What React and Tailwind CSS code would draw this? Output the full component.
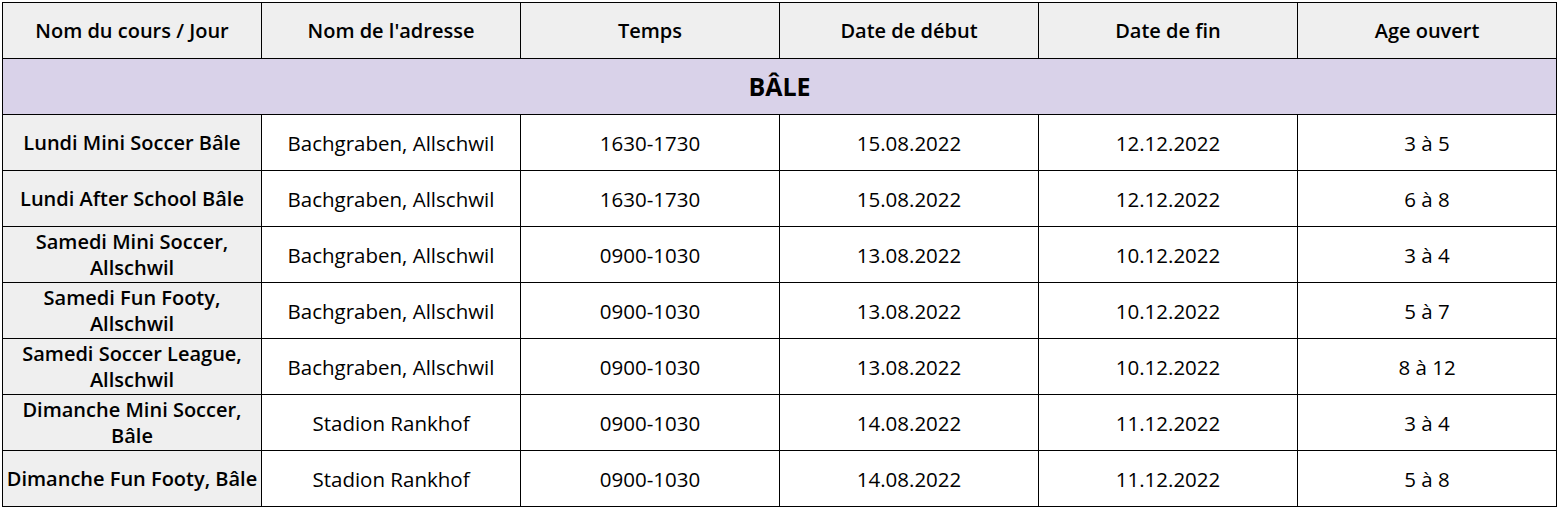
const headers = ["Nom du cours / Jour", "Nom de l'adresse", "Temps", "Date de début", "Date de fin", "Age ouvert"];

const rows = [
  ["Lundi Mini Soccer Bâle", "Bachgraben, Allschwil", "1630-1730", "15.08.2022", "12.12.2022", "3 à 5"],
  ["Lundi After School Bâle", "Bachgraben, Allschwil", "1630-1730", "15.08.2022", "12.12.2022", "6 à 8"],
  ["Samedi Mini Soccer, Allschwil", "Bachgraben, Allschwil", "0900-1030", "13.08.2022", "10.12.2022", "3 à 4"],
  ["Samedi Fun Footy, Allschwil", "Bachgraben, Allschwil", "0900-1030", "13.08.2022", "10.12.2022", "5 à 7"],
  ["Samedi Soccer League, Allschwil", "Bachgraben, Allschwil", "0900-1030", "13.08.2022", "10.12.2022", "8 à 12"],
  ["Dimanche Mini Soccer, Bâle", "Stadion Rankhof", "0900-1030", "14.08.2022", "11.12.2022", "3 à 4"],
  ["Dimanche Fun Footy, Bâle", "Stadion Rankhof", "0900-1030", "14.08.2022", "11.12.2022", "5 à 8"],
];

export default function App() {
  return (
    <div className="bg-white p-[2px] font-['Open_Sans',sans-serif] text-black">
      <table className="border-collapse table-fixed w-[1555px]">
        <colgroup>
          {headers.map((h) => (
            <col key={h} className="w-[259px]" />
          ))}
        </colgroup>
        <thead>
          <tr className="h-[56px] bg-[#efefef]">
            {headers.map((h) => (
              <th key={h} className="border border-black text-[20px] font-semibold text-center px-0 leading-[26px]">
                {h}
              </th>
            ))}
          </tr>
        </thead>
        <tbody>
          <tr className="h-[56px] bg-[#d9d2e9]">
            <td colSpan={6} className="border border-black text-center text-[25px] font-bold">
              BÂLE
            </td>
          </tr>
          {rows.map((r) => (
            <tr key={r[0]} className="h-[56px]">
              <td className="border border-black bg-[#efefef] text-center text-[20px] font-semibold leading-[26px] px-0">
                {r[0]}
              </td>
              {r.slice(1).map((c, i) => (
                <td key={i} className="border border-black text-center text-[20.5px] leading-[26px]">
                  {c}
                </td>
              ))}
            </tr>
          ))}
        </tbody>
      </table>
    </div>
  );
}
